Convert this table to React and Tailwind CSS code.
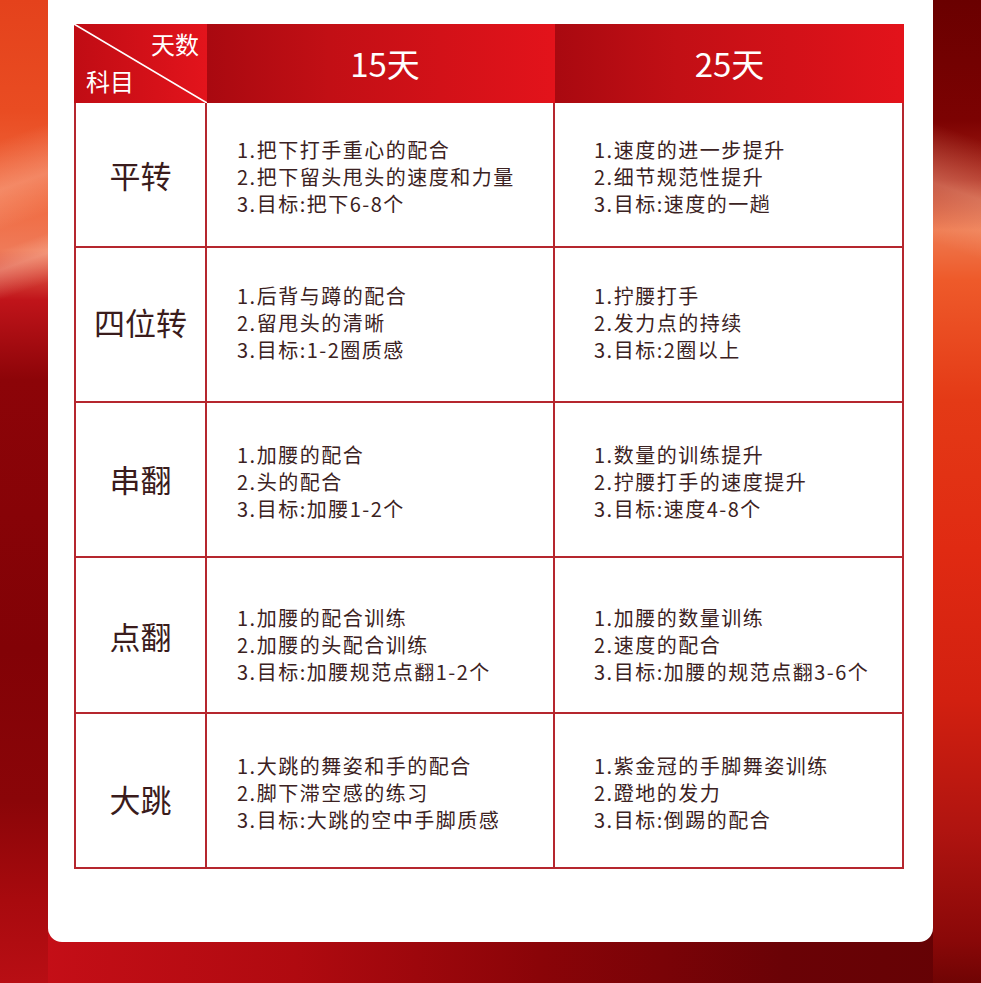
const rows = [
  {
    name: '平转',
    a: ['1.把下打手重心的配合', '2.把下留头甩头的速度和力量', '3.目标:把下6-8个'],
    b: ['1.速度的进一步提升', '2.细节规范性提升', '3.目标:速度的一趟'],
    h: 'h-[145px]',
    pt: 'pt-[4px]',
    lp: 'pt-[2px]',
  },
  {
    name: '四位转',
    a: ['1.后背与蹲的配合', '2.留甩头的清晰', '3.目标:1-2圈质感'],
    b: ['1.拧腰打手', '2.发力点的持续', '3.目标:2圈以上'],
    h: 'h-[155px]',
    pt: 'pb-[4px]',
    lp: 'pb-[4px]',
  },
  {
    name: '串翻',
    a: ['1.加腰的配合', '2.头的配合', '3.目标:加腰1-2个'],
    b: ['1.数量的训练提升', '2.拧腰打手的速度提升', '3.目标:速度4-8个'],
    h: 'h-[155px]',
    pt: 'pt-[4px]',
    lp: 'pt-0',
  },
  {
    name: '点翻',
    a: ['1.加腰的配合训练', '2.加腰的头配合训练', '3.目标:加腰规范点翻1-2个'],
    b: ['1.加腰的数量训练', '2.速度的配合', '3.目标:加腰的规范点翻3-6个'],
    h: 'h-[156px]',
    pt: 'pt-[18px]',
    lp: 'pt-[2px]',
  },
  {
    name: '大跳',
    a: ['1.大跳的舞姿和手的配合', '2.脚下滞空感的练习', '3.目标:大跳的空中手脚质感'],
    b: ['1.紫金冠的手脚舞姿训练', '2.蹬地的发力', '3.目标:倒踢的配合'],
    h: 'h-[155px]',
    pt: 'pt-[4px]',
    lp: 'pt-[18px]',
  },
];

const Lines = ({ items }) => (
  <>
    {items.map((t) => (
      <p key={t} className="text-[20px] leading-[27px] tracking-[1.5px] text-[#3b2222]">{t}</p>
    ))}
  </>
);

export default function App() {
  return (
    <div
      className="w-[981px] h-[983px] overflow-hidden flex bg-[linear-gradient(90deg,#c80f18_0%,#b00a10_30%,#8a0408_55%,#6a0206_80%,#640204_100%)]"
      style={{ fontFamily: '"Noto Sans CJK SC", "Noto Sans", sans-serif' }}
    >
      {/* left strip */}
      <div className="w-[48px] h-[983px] shrink-0 bg-[linear-gradient(160deg,rgba(255,255,255,0)_14%,rgba(255,220,200,0.3)_19%,rgba(255,255,255,0)_23%,rgba(255,255,255,0)_25%,rgba(255,220,200,0.3)_27%,rgba(255,255,255,0)_30%),linear-gradient(180deg,#e4421c_0px,#e94c22_110px,#f06a40_200px,#ef7a58_250px,#c0141a_300px,#8c0408_380px,#820206_650px,#8a0508_800px,#a80a0e_900px,#b80e14_983px)]" />

      {/* card column */}
      <div className="w-[885px] shrink-0">
        <div className="h-[942px] bg-white rounded-b-[14px] pt-[24px] pl-[26px]">
          <div className="w-[830px]">
            {/* header */}
            <div className="flex h-[79px]">
              <div className="relative w-[133px] h-[79px] flex flex-col justify-between bg-[linear-gradient(90deg,#c00c14,#e3141c)] text-white">
                <svg className="absolute inset-0" width="133" height="79" viewBox="0 0 133 79">
                  <line x1="0" y1="0" x2="133" y2="79" stroke="#ffffff" strokeWidth="1.6" />
                </svg>
                <div className="flex justify-end pr-[8px] pt-[5px] text-[24px] leading-[29px]">天数</div>
                <div className="pl-[12px] pb-[8px] text-[24px] leading-[29px]">科目</div>
              </div>
              <div className="w-[348px] h-[79px] flex items-center justify-center bg-[linear-gradient(90deg,#a90910_0%,#c20f15_35%,#e3131b_100%)] text-white text-[33px] pl-[8px]">
                15天
              </div>
              <div className="w-[349px] h-[79px] flex items-center justify-center bg-[linear-gradient(90deg,#a90910_0%,#c20f15_35%,#e3131b_100%)] text-white text-[33px]">
                25天
              </div>
            </div>

            {/* body */}
            {rows.map((r) => (
              <div key={r.name} className={`flex ${r.h}`}>
                <div className={`w-[133px] h-full border-l-2 border-r-2 border-b-2 border-[#b5262e] flex items-center justify-center text-[31px] text-[#3a1c1c] ${r.lp}`}>
                  {r.name}
                </div>
                <div className={`w-[348px] h-full border-r-2 border-b-2 border-[#b5262e] flex flex-col justify-center pl-[30px] ${r.pt}`}>
                  <Lines items={r.a} />
                </div>
                <div className={`w-[349px] h-full border-r-2 border-b-2 border-[#b5262e] flex flex-col justify-center pl-[39px] ${r.pt}`}>
                  <Lines items={r.b} />
                </div>
              </div>
            ))}
          </div>
        </div>
      </div>

      {/* right strip */}
      <div className="w-[48px] h-[983px] shrink-0 bg-[linear-gradient(200deg,rgba(255,255,255,0)_14%,rgba(255,200,170,0.35)_20%,rgba(255,255,255,0)_26%),linear-gradient(180deg,#6a0000_0px,#7c0202_120px,#a82216_180px,#ee7a50_230px,#ee5a2a_280px,#e43a16_400px,#e02a12_550px,#d22010_700px,#b01410_830px,#8a0808_940px,#700404_983px)]" />
    </div>
  );
}
